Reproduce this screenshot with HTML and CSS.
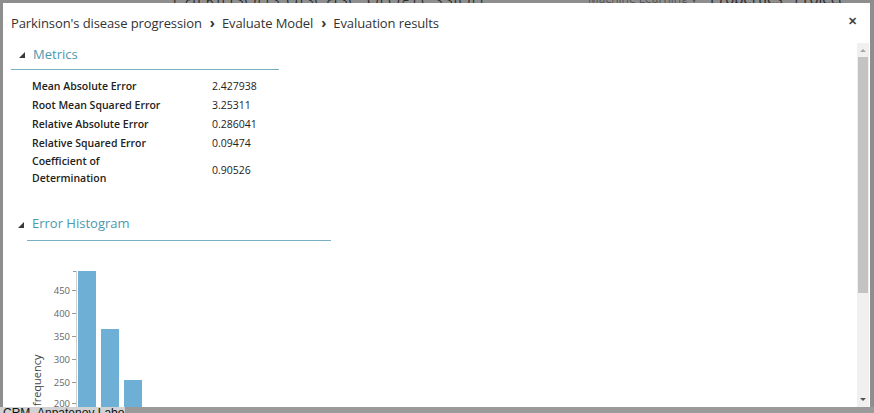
FILE: index.html
```html
<!DOCTYPE html>
<html>
<head>
<meta charset="utf-8">
<link rel="stylesheet" href="styles.css">
</head>
<body>
<div class="app">
  <div class="app-top">
    <span class="app-title">Parkinsons disease progression</span>
    <span class="app-menu">Machine Learning ▾</span>
    <span class="app-tabs">Properties&nbsp;&nbsp;&nbsp;Project</span>
  </div>
  <div class="app-bottom">
    <span class="app-status">CRM_Anpatenov Labo</span>
    <span class="app-tools"></span>
  </div>
</div>

<div class="modal">
  <div class="modal-head">
    <div class="crumbs">Parkinson's disease progression<span class="sep">›</span>Evaluate Model<span class="sep">›</span>Evaluation results</div>
    <div class="close">✕</div>
  </div>
  <div class="modal-body">
    <div class="content">
      <section class="metrics">
        <div class="sec-head"><span class="tri"></span><span class="sec-title">Metrics</span></div>
        <table class="mtable">
          <tr><td class="lbl">Mean Absolute Error</td><td class="val">2.427938</td></tr>
          <tr><td class="lbl">Root Mean Squared Error</td><td class="val">3.25311</td></tr>
          <tr><td class="lbl">Relative Absolute Error</td><td class="val">0.286041</td></tr>
          <tr><td class="lbl">Relative Squared Error</td><td class="val">0.09474</td></tr>
          <tr><td class="lbl">Coefficient of<br>Determination</td><td class="val">0.90526</td></tr>
        </table>
      </section>
      <section class="hist">
        <div class="sec-head hist-head"><span class="tri"></span><span class="sec-title">Error Histogram</span></div>
        <svg class="chart" width="320" height="170" viewBox="0 0 320 170">
          <g class="bars">
            <rect x="55" y="15" width="18" height="160"/>
            <rect x="78" y="73" width="18" height="110"/>
            <rect x="101" y="124" width="18" height="60"/>
          </g>
          <line class="axis" x1="53.5" y1="15" x2="53.5" y2="170"/>
          <g class="ticks">
            <line x1="49" y1="34.5" x2="53" y2="34.5"/>
            <line x1="49" y1="57.5" x2="53" y2="57.5"/>
            <line x1="49" y1="80.5" x2="53" y2="80.5"/>
            <line x1="49" y1="103.5" x2="53" y2="103.5"/>
            <line x1="49" y1="126.5" x2="53" y2="126.5"/>
            <line x1="49" y1="147.5" x2="53" y2="147.5"/>
            <line x1="50" y1="15.5" x2="53" y2="15.5"/>
          </g>
          <g class="tlabels">
            <text x="47" y="38">450</text>
            <text x="47" y="61">400</text>
            <text x="47" y="84">350</text>
            <text x="47" y="107">300</text>
            <text x="47" y="130">250</text>
            <text x="47" y="150.5">200</text>
          </g>
          <text class="ylabel" transform="translate(18 150) rotate(-90)">frequency</text>
        </svg>
      </section>
    </div>
    <div class="scrollbar">
      <div class="sb-btn up"></div>
      <div class="sb-track"><div class="sb-thumb"></div></div>
      <div class="sb-btn down"></div>
    </div>
  </div>
</div>
</body>
</html>
```

FILE: styles.css
```css
html, body {
  margin: 0;
  padding: 0;
}
body {
  width: 874px;
  height: 413px;
  overflow: hidden;
  background: #8e8e8e;
  font-family: "Open Sans", "Noto Sans", sans-serif;
  position: relative;
}
.app {
  width: 874px;
  height: 413px;
  display: flex;
  flex-direction: column;
  justify-content: space-between;
}
.app-top {
  height: 14px;
  position: relative;
  overflow: hidden;
}
.app-title {
  position: absolute;
  left: 172px;
  top: -18px;
  font-size: 22px;
  color: #2a2a2a;
  font-family: "Open Sans", sans-serif;
  font-weight: 300;
}
.app-menu {
  position: absolute;
  left: 588px;
  top: -10px;
  font-size: 12px;
  color: #555;
}
.app-tabs {
  position: absolute;
  left: 710px;
  top: -12px;
  font-size: 15px;
  color: #2a2a2a;
}
.app-bottom {
  height: 6px;
  display: flex;
  overflow: hidden;
}
.app-status {
  width: 122px;
  background: #d2d2d2;
  font-family: "Liberation Sans", sans-serif;
  font-size: 12px;
  line-height: 12px;
  color: #111;
  padding-left: 3px;
  white-space: nowrap;
  overflow: hidden;
}
.app-tools {
  flex: 1;
  background: #9a9a9a;
}

.modal {
  position: absolute;
  left: 3px;
  top: 3px;
  width: 867px;
  height: 404px;
  background: #fff;
  display: flex;
  flex-direction: column;
}
.modal-head {
  height: 40px;
  display: flex;
  align-items: center;
  justify-content: space-between;
  padding: 0 13px 0 8px;
  flex: none;
}
.crumbs {
  font-size: 13px;
  color: #333;
  margin-top: -1px;
  letter-spacing: -0.1px;
}
.sep {
  display: inline-block;
  margin: 0 7px 0 8px;
  font-weight: 700;
  font-size: 14px;
}
.close {
  font-size: 11px;
  color: #444;
  font-weight: 700;
  margin-top: -6px;
}
.modal-body {
  flex: 1;
  display: flex;
  min-height: 0;
}
.content {
  flex: 1;
  overflow: hidden;
  padding-left: 8px;
}
.sec-head {
  width: 268px;
  height: 27px;
  display: flex;
  align-items: center;
  border-bottom: 1px solid #79afc2;
  box-sizing: border-box;
}
.tri {
  width: 0;
  height: 0;
  margin-left: 8px;
  margin-right: 8px;
  border-left: 6px solid transparent;
  border-bottom: 6px solid #3a3a3a;
  margin-top: -2px;
}
.sec-title {
  font-size: 13px;
  color: #4d97b0;
  margin-top: -5px;
}
.mtable {
  border-collapse: collapse;
  margin: 7px 0 0 21px;
  font-family: "Open Sans", sans-serif;
  font-size: 10.5px;
  color: #222;
}
.mtable td {
  padding: 0;
  height: 19px;
  vertical-align: middle;
  line-height: 17px;
}
.lbl {
  font-weight: 600;
  width: 180px;
}
.val {
  font-weight: 400;
}
.hist {
  margin-top: 24px;
}
.hist-head {
  width: 304px;
  margin-left: 16px;
  height: 30px;
}
.hist-head .tri {
  margin-left: -9px;
}
.chart {
  display: block;
  margin-top: 15px;
  margin-left: 12px;
}
.bars rect {
  fill: #6eb0d5;
}
.axis {
  stroke: #cfcfcf;
  stroke-width: 1;
}
.ticks line {
  stroke: #999;
  stroke-width: 1;
}
.tlabels text {
  font-family: "Open Sans", sans-serif;
  font-size: 9.5px;
  fill: #666;
  text-anchor: end;
}
.ylabel {
  font-family: "Open Sans", sans-serif;
  font-size: 11px;
  fill: #444;
  text-anchor: start;
}
.scrollbar {
  width: 12px;
  margin-right: 1px;
  background: #f0f0f0;
  display: flex;
  flex-direction: column;
  flex: none;
}
.sb-btn {
  height: 14px;
  flex: none;
  position: relative;
}
.sb-btn::after {
  content: "";
  position: absolute;
  left: 3px;
  width: 0;
  height: 0;
  border-left: 3px solid transparent;
  border-right: 3px solid transparent;
}
.sb-btn.up::after {
  top: 6px;
  border-bottom: 3px solid #a8a8a8;
}
.sb-btn.down::after {
  top: 5px;
  border-top: 3px solid #505050;
}
.sb-track {
  flex: 1;
  padding: 0 1px;
}
.sb-thumb {
  height: 236px;
  background: #c3c3c3;
}
```
